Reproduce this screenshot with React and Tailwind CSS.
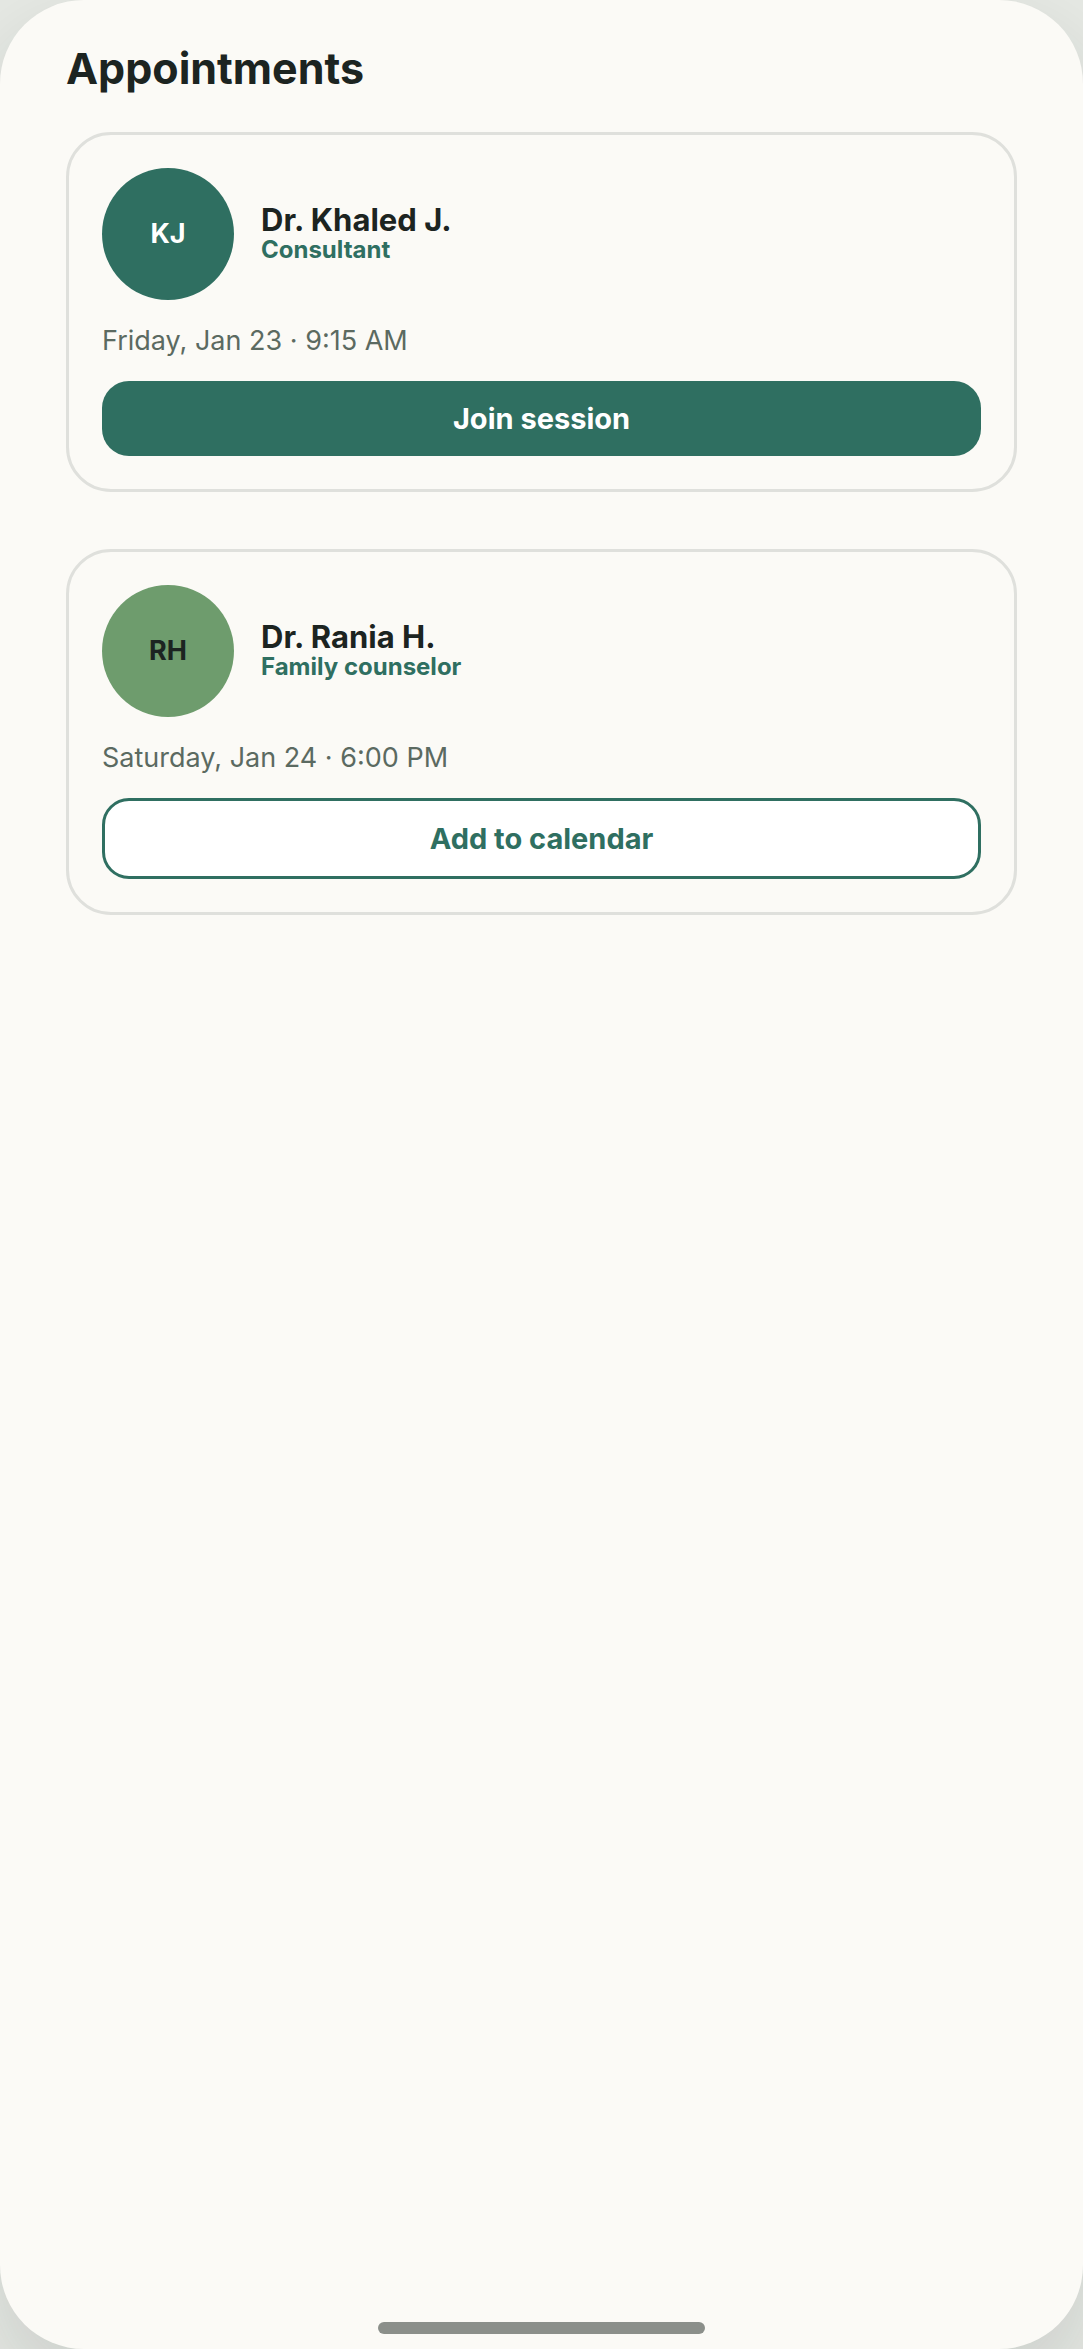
import clsx from 'clsx'

const appointments = [
  {
    id: 1,
    initials: 'KJ',
    name: 'Dr. Khaled J.',
    role: 'Consultant',
    time: 'Friday, Jan 23 · 9:15 AM',
    action: 'Join session',
    primary: true,
  },
  {
    id: 2,
    initials: 'RH',
    name: 'Dr. Rania H.',
    role: 'Family counselor',
    time: 'Saturday, Jan 24 · 6:00 PM',
    action: 'Add to calendar',
    primary: false,
  },
]

function AppointmentCard({ appointment }) {
  const { initials, name, role, time, action, primary } = appointment

  return (
    <article className="rounded-[45px] border-3 border-[#dfe0dc] p-[33px]">
      <div className="flex items-center gap-[27px]">
        <div
          className={clsx(
            'flex size-[132px] shrink-0 items-center justify-center rounded-full text-[27px] leading-8 font-bold',
            primary ? 'bg-[#2f6f61] text-white' : 'bg-[#6e9c6d] text-[#1c2421]'
          )}
        >
          {initials}
        </div>
        <div>
          <h2 className="text-[31px] leading-8 font-bold text-[#1c2421]">{name}</h2>
          <p className="text-[24px] leading-7 font-bold text-[#2f6f61]">{role}</p>
        </div>
      </div>

      <p className="my-6 text-[27px] leading-[33px] text-[#5b6a61]">{time}</p>

      <button
        type="button"
        className={clsx(
          'w-full rounded-[27px] py-[21px] text-[29px] leading-[33px] font-bold',
          primary
            ? 'bg-[#2f6f61] text-white'
            : 'border-3 border-[#2f6f61] bg-white text-[#2f6f61]'
        )}
      >
        {action}
      </button>
    </article>
  )
}

export default function App() {
  return (
    <div className="min-h-screen bg-[#e6e9e4] font-[Inter,sans-serif] [font-optical-sizing:none]">
      <div className="flex min-h-screen flex-col rounded-[84px] bg-[#fbfaf6] px-[66px] pt-11 pb-[15px] shadow-[0_36px_90px_rgba(28,36,33,0.14)]">
        <h1 className="mb-10 text-[43px] leading-12 font-bold text-[#1c2421]">Appointments</h1>

        <main className="flex flex-1 flex-col gap-[57px]">
          {appointments.map((appointment) => (
            <AppointmentCard key={appointment.id} appointment={appointment} />
          ))}
        </main>

        {/* Home indicator */}
        <div className="h-3 w-[327px] self-center rounded-full bg-[#8b8f8a]" />
      </div>
    </div>
  )
}
